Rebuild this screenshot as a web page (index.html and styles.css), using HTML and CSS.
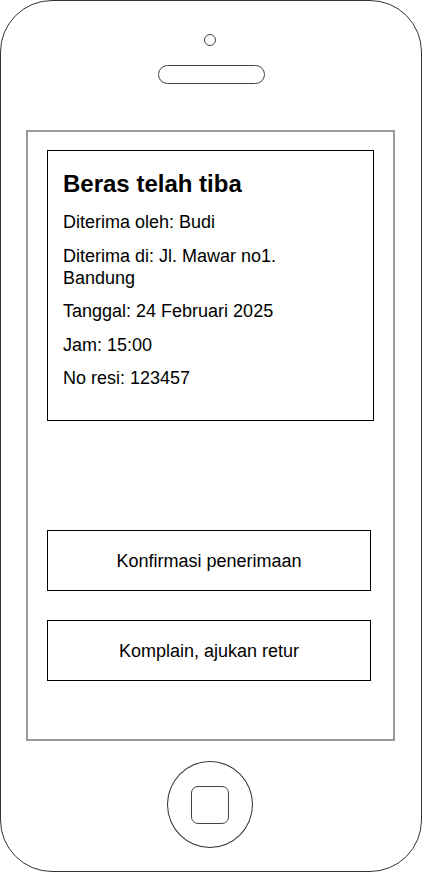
FILE: index.html
```html
<!DOCTYPE html>
<html lang="id">
<head>
<meta charset="utf-8">
<title>Beras telah tiba</title>
<link rel="stylesheet" href="styles.css">
</head>
<body>
<div class="phone">
  <div class="camera"></div>
  <div class="speaker"></div>
  <div class="screen">
    <div class="card">
      <h1 class="title">Beras telah tiba</h1>
      <p class="line">Diterima oleh: Budi</p>
      <p class="line">Diterima di: Jl. Mawar no1.<br>Bandung</p>
      <p class="line">Tanggal: 24 Februari 2025</p>
      <p class="line">Jam: 15:00</p>
      <p class="line">No resi: 123457</p>
    </div>
    <div class="btn btn-first">Konfirmasi penerimaan</div>
    <div class="btn btn-second">Komplain, ajukan retur</div>
  </div>
  <div class="home"><div class="home-square"></div></div>
</div>
</body>
</html>
```

FILE: styles.css
```css
* { box-sizing: border-box; }
html, body {
  margin: 0;
  padding: 0;
  background: #fff;
}
body {
  font-family: "Liberation Sans", Arial, sans-serif;
  color: #000;
}
.phone {
  width: 422px;
  height: 872px;
  border: 1px solid #333;
  border-radius: 52px;
  display: flex;
  flex-direction: column;
  align-items: center;
}
.camera {
  width: 12px;
  height: 12px;
  margin-top: 33px;
  margin-left: -2px;
  border: 1px solid #444;
  border-radius: 50%;
}
.speaker {
  width: 107px;
  height: 19px;
  margin-top: 19px;
  border: 1px solid #444;
  border-radius: 10px;
}
.screen {
  align-self: flex-start;
  margin-left: 25px;
  margin-top: 46px;
  width: 369px;
  height: 611px;
  border: 2px solid #9a9a9a;
  padding: 18px 0 0 19px;
  display: flex;
  flex-direction: column;
  align-items: flex-start;
}
.card {
  width: 327px;
  height: 271px;
  border: 1px solid #000;
  padding: 19px 15px 0 15px;
}
.title {
  margin: 0 0 13px 0;
  font-size: 24px;
  line-height: 28px;
  font-weight: bold;
}
.line {
  margin: 0 0 11.5px 0;
  font-size: 18px;
  line-height: 22px;
}
.btn {
  width: 324px;
  height: 61px;
  border: 1px solid #000;
  display: flex;
  align-items: center;
  justify-content: center;
  font-size: 18px;
  line-height: 22px;
}
.btn-first { margin-top: 109px; }
.btn-second { margin-top: 29px; }
.home {
  margin-top: 20px;
  margin-left: -2px;
  width: 86px;
  height: 87px;
  border: 1px solid #333;
  border-radius: 50%;
  display: flex;
  align-items: center;
  justify-content: center;
}
.home-square {
  width: 38px;
  height: 38px;
  border: 1px solid #444;
  border-radius: 7px;
}
```
